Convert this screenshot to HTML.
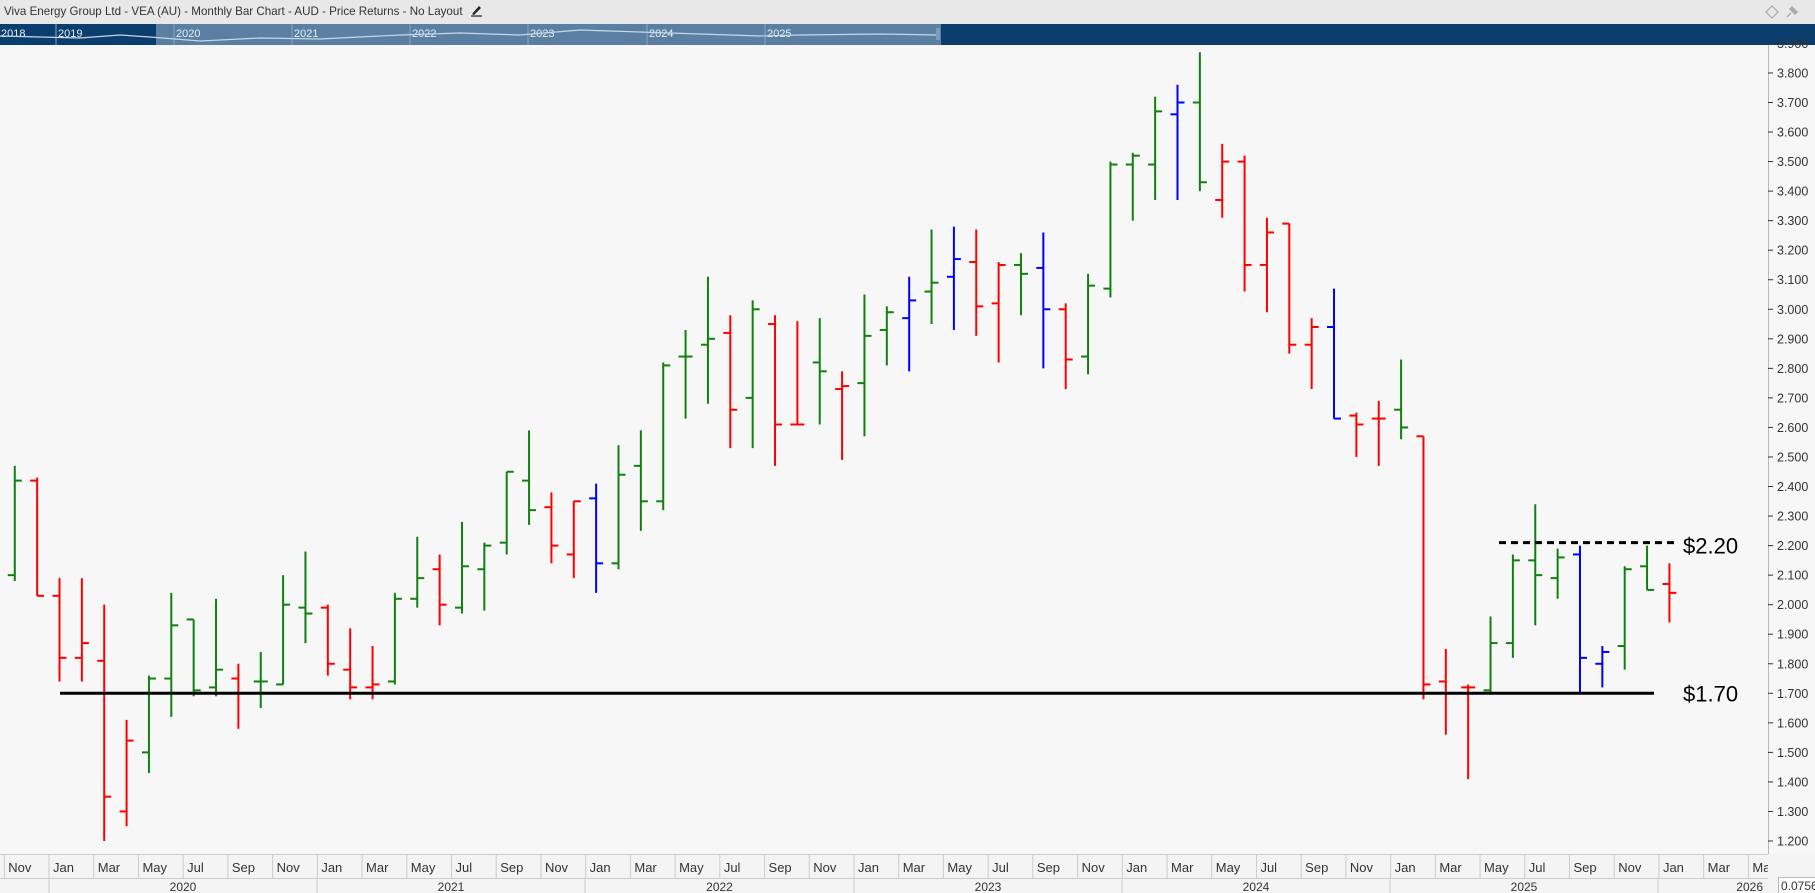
<!DOCTYPE html>
<html><head><meta charset="utf-8"><style>
body{margin:0;width:1815px;height:893px;overflow:hidden;background:#f7f7f7;font-family:"Liberation Sans",sans-serif;position:relative}
#title{position:absolute;left:0;top:0;width:1815px;height:24px;background:#e8e8e8;font-size:11.6px;color:#333;line-height:24px}
#nav{position:absolute;left:0;top:24px;width:1815px;height:21px;background:#0b3d6e}
svg{position:absolute;left:0;top:0}
</style></head><body>
<div id="title"><span style="margin-left:4px">Viva Energy Group Ltd - VEA (AU) - Monthly Bar Chart - AUD - Price Returns - No Layout</span><svg style="position:relative;left:7px;top:2px" width="14" height="14" viewBox="0 0 14 14"><path d="M2 11 L9 3 L11 5 L4 12 Z" fill="#222"/><path d="M1 13 H12" stroke="#222" stroke-width="1.2"/></svg>
<svg style="left:1764px;top:4px" width="16" height="16" viewBox="0 0 16 16"><path d="M8 2 L14 8 L8 14 L2 8 Z" fill="none" stroke="#aaa" stroke-width="1.2"/></svg>
<svg style="left:1784px;top:4px" width="16" height="16" viewBox="0 0 16 16"><path d="M3 13 L7 9 M6 5 L11 10 M8 3 L13 8 L11 10 L6 5 Z" fill="#aaa" stroke="#aaa" stroke-width="1.5"/></svg>
</div>
<div id="nav"></div>
<svg id="c" width="1815" height="893"></svg>
<script>
var s='';
function L(x1,y1,x2,y2,c,w,extra){s+='<line x1="'+x1+'" y1="'+y1+'" x2="'+x2+'" y2="'+y2+'" stroke="'+c+'" stroke-width="'+w+'" '+(extra||'')+'/>';}
function T(x,y,t,sz,c,anchor){s+='<text x="'+x+'" y="'+y+'" font-size="'+sz+'" fill="'+c+'" font-family="Liberation Sans, sans-serif"'+(anchor?' text-anchor="'+anchor+'"':'')+'>'+t+'</text>';}
s+='<rect x="156" y="24" width="785" height="21" fill="#5a7fa3"/>';
var yrs=['2018','2019','2020','2021','2022','2023','2024','2025'];
var nx=[0,57,175,293,411,529,648,766];
for(var i=0;i<yrs.length;i++){ if(i>0)L(nx[i]-1,24,nx[i]-1,45,'#8aa6c2',1); T(nx[i]+1,37,yrs[i],11,'#e8eef5');}
s+='<polyline points="0,36 40,37 80,38 120,35 150,37 200,41 260,38 320,39 400,35 460,33 520,35 580,30 640,32 700,34 760,36 800,35 880,34 939,35" fill="none" stroke="#c8d6e4" stroke-width="1.2"/>';
s+='<rect x="936" y="28" width="4" height="12" fill="#7f9dbb"/>';
function Y(p){return 841-(p-1.2)*295.4;}
L(1768.5,45,1768.5,854,'#bbb',1);
for(var k=12;k<=39;k++){var p=k/10,y=Y(p);L(1768,y,1773,y,'#333',1);T(1777,y+4.5,p.toFixed(3),12.5,'#333');}
var d=[
[-2,'g',2.10,2.47,2.08,2.42],[-1,'r',2.42,2.43,2.03,2.03],
[0,'r',2.03,2.09,1.74,1.82],[1,'r',1.82,2.09,1.74,1.87],[2,'r',1.81,2.00,1.20,1.35],[3,'r',1.30,1.61,1.25,1.54],
[4,'g',1.50,1.76,1.43,1.75],[5,'g',1.75,2.04,1.62,1.93],[6,'g',1.95,1.95,1.69,1.71],[7,'g',1.72,2.02,1.69,1.78],
[8,'r',1.75,1.80,1.58,1.70],[9,'g',1.74,1.84,1.65,1.74],[10,'g',1.73,2.10,1.73,2.00],[11,'g',1.99,2.18,1.87,1.97],
[12,'r',1.99,2.00,1.76,1.80],[13,'r',1.78,1.92,1.68,1.72],[14,'r',1.72,1.86,1.68,1.73],[15,'g',1.74,2.04,1.73,2.02],
[16,'g',2.02,2.23,1.99,2.09],[17,'r',2.12,2.17,1.93,2.00],[18,'g',1.99,2.28,1.97,2.13],[19,'g',2.12,2.21,1.98,2.20],
[20,'g',2.21,2.45,2.17,2.45],[21,'g',2.42,2.59,2.27,2.32],[22,'r',2.33,2.38,2.14,2.20],[23,'r',2.17,2.35,2.09,2.35],
[24,'b',2.36,2.41,2.04,2.14],[25,'g',2.14,2.54,2.12,2.44],[26,'g',2.47,2.59,2.25,2.35],[27,'g',2.35,2.82,2.32,2.81],
[28,'g',2.84,2.93,2.63,2.84],[29,'g',2.88,3.11,2.68,2.90],[30,'r',2.92,2.98,2.53,2.66],[31,'g',2.70,3.03,2.53,3.00],
[32,'r',2.95,2.98,2.47,2.61],[33,'r',2.61,2.96,2.61,2.61],[34,'g',2.82,2.97,2.61,2.79],[35,'r',2.73,2.79,2.49,2.74],
[36,'g',2.75,3.05,2.57,2.91],[37,'g',2.93,3.01,2.81,2.99],[38,'b',2.97,3.11,2.79,3.03],[39,'g',3.06,3.27,2.95,3.09],
[40,'b',3.11,3.28,2.93,3.17],[41,'r',3.16,3.27,2.91,3.01],[42,'r',3.02,3.16,2.82,3.15],[43,'g',3.15,3.19,2.98,3.12],
[44,'b',3.14,3.26,2.80,3.00],[45,'r',3.00,3.02,2.73,2.83],[46,'g',2.84,3.12,2.78,3.08],[47,'g',3.07,3.50,3.04,3.49],
[48,'g',3.49,3.53,3.30,3.52],[49,'g',3.49,3.72,3.37,3.67],[50,'b',3.66,3.76,3.37,3.70],[51,'g',3.70,3.87,3.40,3.43],
[52,'r',3.37,3.56,3.31,3.50],[53,'r',3.50,3.52,3.06,3.15],[54,'r',3.15,3.31,2.99,3.26],[55,'r',3.29,3.29,2.85,2.88],
[56,'r',2.88,2.97,2.73,2.94],[57,'b',2.94,3.07,2.63,2.63],[58,'r',2.64,2.65,2.50,2.61],[59,'r',2.63,2.69,2.47,2.63],
[60,'g',2.66,2.83,2.56,2.60],[61,'r',2.57,2.57,1.68,1.73],[62,'r',1.74,1.85,1.56,1.70],[63,'r',1.72,1.73,1.41,1.72],
[64,'g',1.71,1.96,1.70,1.87],[65,'g',1.87,2.17,1.82,2.15],[66,'g',2.15,2.34,1.93,2.10],[67,'g',2.09,2.19,2.02,2.16],
[68,'b',2.17,2.20,1.70,1.82],[69,'b',1.80,1.86,1.72,1.84],[70,'g',1.86,2.13,1.78,2.12],[71,'g',2.13,2.20,2.05,2.05],
[72,'r',2.07,2.14,1.94,2.04]];
var col={g:'#108010',r:'#ff0000',b:'#0000ff'};
d.forEach(function(b){var x=59.5+22.36*b[0],c=col[b[1]];
L(x,Y(b[3]),x,Y(b[4]),c,2);L(x-7,Y(b[2]),x,Y(b[2]),c,2);L(x,Y(b[5]),x+7,Y(b[5]),c,2);});
L(60,Y(1.70),1654,Y(1.70),'#000',3);
L(1499,Y(2.21),1677,Y(2.21),'#000',3,'stroke-dasharray="7,5"');
T(1683,Y(2.20)+8,'$2.20',22,'#000');T(1683,Y(1.70)+8,'$1.70',22,'#000');
s+='<rect x="0" y="854" width="1768" height="39" fill="#f4f4f4"/>';
L(0,854.5,1768,854.5,'#ccc',1);L(0,878.5,1768,878.5,'#ccc',1);
var ms=['Nov','Jan','Mar','May','Jul','Sep'];
for(var j=0;j<40;j++){var x=4.3+44.72*j;if(x>1768)break;L(x,854,x,878,'#ccc',1);T(x+4,872,ms[j%6],13,'#333');}
var yb=[[-220,49,'2019'],[49,317,'2020'],[317,585,'2021'],[585,854,'2022'],[854,1122,'2023'],[1122,1390,'2024'],[1390,1658,'2025']];
yb.forEach(function(q){L(q[1],878,q[1],893,'#ccc',1);T((q[0]+q[1])/2,891,q[2],12,'#333','middle');});
T(1763,891,'2026',12,'#333','end');
s+='<rect x="1768" y="854" width="47" height="39" fill="#f4f4f4"/>';
s+='<rect x="1778.5" y="877.5" width="40" height="16" fill="#fff" stroke="#bbb"/>';
T(1781,890,'0.0756',12,'#333');
document.getElementById('c').innerHTML=s;
</script>
</body></html>
